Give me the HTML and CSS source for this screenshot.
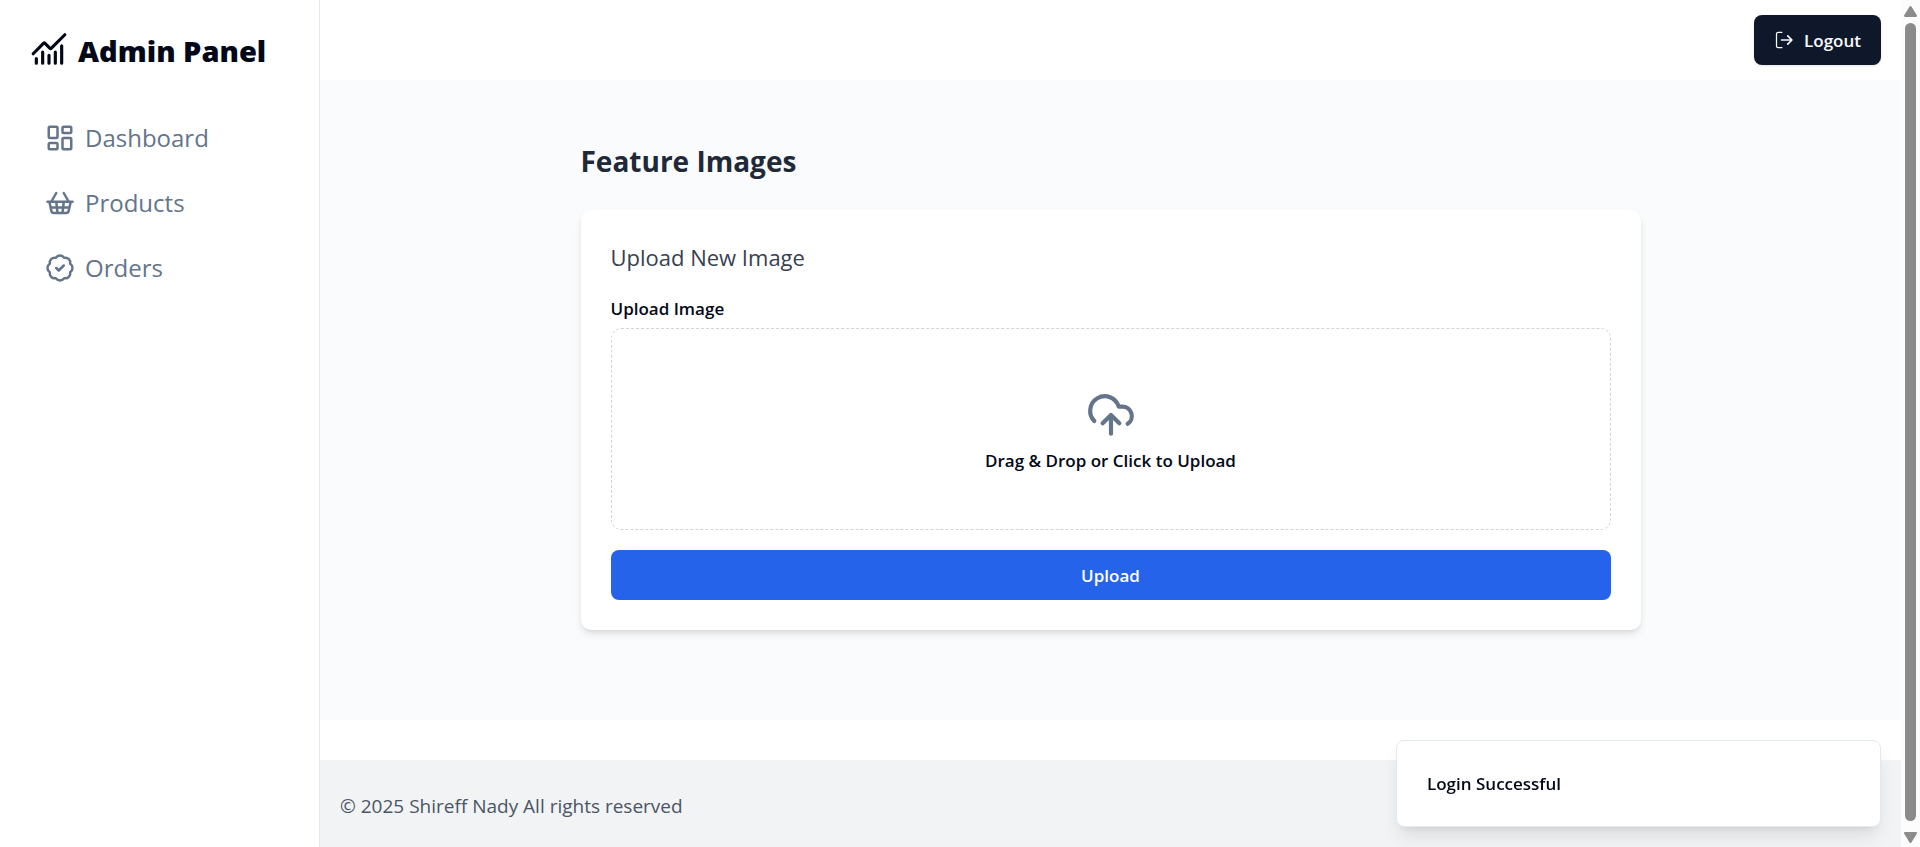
FILE: index.html
```html
<!DOCTYPE html>
<html lang="en">
<head>
<meta charset="utf-8">
<title>Admin Panel</title>
<link rel="stylesheet" href="styles.css">
</head>
<body>
<div class="app">
  <aside class="sidebar">
    <div class="brand">
      <svg class="brand-icon" viewBox="0 0 24 24"><path d="m22 3-8.646 8.646a.5.5 0 0 1-.708 0L9.354 8.354a.5.5 0 0 0-.707 0L2 15"/><path d="M4 18v3M8 14v7M12 16v5M16 14v7M20 10v11"/></svg>
      <h1 class="brand-name">Admin Panel</h1>
    </div>
    <nav class="nav">
      <a class="nav-link" href="#"><svg class="nav-icon" viewBox="0 0 24 24"><rect x="3" y="3" width="7" height="9" rx="1"/><rect x="14" y="3" width="7" height="5" rx="1"/><rect x="14" y="12" width="7" height="9" rx="1"/><rect x="3" y="16" width="7" height="5" rx="1"/></svg>Dashboard</a>
      <a class="nav-link" href="#"><svg class="nav-icon" viewBox="0 0 24 24"><path d="m15 11-1 9M19 11l-4-7M2 11h20M3.5 11l1.6 7.4a2 2 0 0 0 2 1.6h9.8a2 2 0 0 0 2-1.6l1.7-7.4M4.5 15.500h15M5 11l4-7M9 11l1 9"/></svg>Products</a>
      <a class="nav-link" href="#"><svg class="nav-icon" viewBox="0 0 24 24"><path d="M3.850 8.620a4 4 0 0 1 4.780-4.770 4 4 0 0 1 6.740 0 4 4 0 0 1 4.780 4.780 4 4 0 0 1 0 6.740 4 4 0 0 1-4.770 4.780 4 4 0 0 1-6.750 0 4 4 0 0 1-4.780-4.770 4 4 0 0 1 0-6.760Z"/><path d="m9 12 2 2 4-4"/></svg>Orders</a>
    </nav>
  </aside>
  <div class="content">
    <header class="topbar">
      <button class="logout" type="button"><svg class="logout-icon" viewBox="0 0 24 24"><path d="M9.500 2.800H5a2 2 0 0 0-2 2v14.400a2 2 0 0 0 2 2h4.500"/><path class="logout-arrow" d="m16.500 7 5 5-5 5M21.500 12H9"/></svg>Logout</button>
    </header>
    <main class="main">
      <div class="page">
        <h2 class="page-title">Feature Images</h2>
        <form class="card">
          <h3 class="card-title">Upload New Image</h3>
          <label class="label" for="file">Upload Image</label>
          <label class="dropzone" for="file">
            <svg class="cloud" viewBox="0 0 24 24"><path d="M4 14.899A7 7 0 1 1 15.710 8h1.790a4.500 4.500 0 0 1 2.500 8.242"/><path d="M12 12v9M16 16l-4-4-4 4"/></svg>
            <span>Drag &amp; Drop or Click to Upload</span>
          </label>
          <input class="file" id="file" type="file">
          <button class="upload" type="button">Upload</button>
        </form>
      </div>
    </main>
    <footer class="footer">© 2025 Shireff Nady All rights reserved</footer>
  </div>
</div>
<div class="toast" role="status">Login Successful</div>
<div class="scrollbar" aria-hidden="true">
  <svg class="arrow" viewBox="0 0 12 10"><path d="M6 1 11 9H1Z"/></svg>
  <div class="thumb"></div>
  <svg class="arrow" viewBox="0 0 12 10"><path d="M6 9 1 1h10Z"/></svg>
</div>
</body>
</html>
```
FILE: styles.css
```css
* { box-sizing: border-box; }
body { margin: 0; padding-right: 19px; color: #020817; background: #fff; font: 17px/25px "Open Sans", "Noto Sans", sans-serif; overflow: hidden; }
h1, h2, h3 { margin: 0; }
button { font: inherit; font-weight: 600; border: 0; }
svg { fill: none; stroke: currentColor; stroke-width: 2; stroke-linecap: round; stroke-linejoin: round; flex: none; }
.app { display: flex; min-height: 100vh; }
.sidebar { width: 320px; flex: none; padding: 30px; border-right: 1px solid #e2e8f0; }
.brand { display: flex; align-items: flex-start; gap: 10px; }
.brand-icon { width: 38px; height: 38px; }
.brand-name { font-size: 29px; line-height: 42px; font-weight: 800; }
.nav { display: flex; flex-direction: column; gap: 10px; margin-top: 38px; }
.nav-link { display: flex; align-items: center; gap: 10px; padding: 10px 15px; color: #64748b; font-size: 24px; line-height: 35px; text-decoration: none; }
.nav-icon { width: 30px; height: 30px; }
.content { flex: 1; display: flex; flex-direction: column; }
.topbar { display: flex; justify-content: flex-end; padding: 15px 20px; }
.logout { display: flex; align-items: center; gap: 10px; height: 50px; padding: 0 20px; border-radius: 8px; background: #0f172a; color: #f8fafc; box-shadow: 0 1px 3px rgba(0,0,0,.1); }
.logout-icon { width: 20px; height: 20px; stroke-width: 1.5; }
.logout-arrow { stroke-width: 2; }
.main { margin-bottom: 40px; padding: 60px 20px 90px; background: #f9fbfd; }
.page { max-width: 1060px; margin: 0 auto; }
.page-title { margin-bottom: 28px; font-size: 28px; line-height: 42px; color: #1f2937; }
.card { display: flex; flex-direction: column; padding: 30px; border-radius: 10px; background: #fff; box-shadow: 0 5px 8px -1px rgba(0,0,0,.1), 0 2px 5px -2px rgba(0,0,0,.1); }
.card-title { margin-bottom: 20px; font-size: 22px; line-height: 35px; font-weight: 500; color: #374151; }
.label { margin-bottom: 5px; line-height: 28px; font-weight: 600; }
.dropzone { display: flex; flex-direction: column; align-items: center; justify-content: center; gap: 8px; min-height: 202px; padding-top: 4px; border: 1px dashed #d1d5db; border-radius: 10px; font-weight: 600; }
.cloud { width: 50px; height: 50px; color: #64748b; }
.file { display: none; }
.upload { height: 50px; margin-top: 20px; border-radius: 8px; background: #2563eb; color: #fff; }
.footer { flex: 1; padding: 30px 20px; background: #f1f3f5; color: #4b5563; font-size: 19px; line-height: 32px; }
.toast { position: fixed; right: 39px; bottom: 20px; width: 485px; padding: 30px; border: 1px solid #e2e8f0; border-radius: 8px; background: #fff; font-weight: 600; box-shadow: 0 12px 19px -4px rgba(0,0,0,.1), 0 5px 8px -5px rgba(0,0,0,.1); }
.scrollbar { position: fixed; top: 0; right: 0; bottom: 0; width: 19px; display: flex; flex-direction: column; align-items: center; gap: 6px; padding: 6px 0 4px; background: #fcfcfc; color: #8b8b8b; }
.arrow { width: 13px; height: 11px; fill: currentColor; }
.thumb { flex: 1; width: 11px; margin-bottom: 5px; border-radius: 6px; background: #8b8b8b; }
```
